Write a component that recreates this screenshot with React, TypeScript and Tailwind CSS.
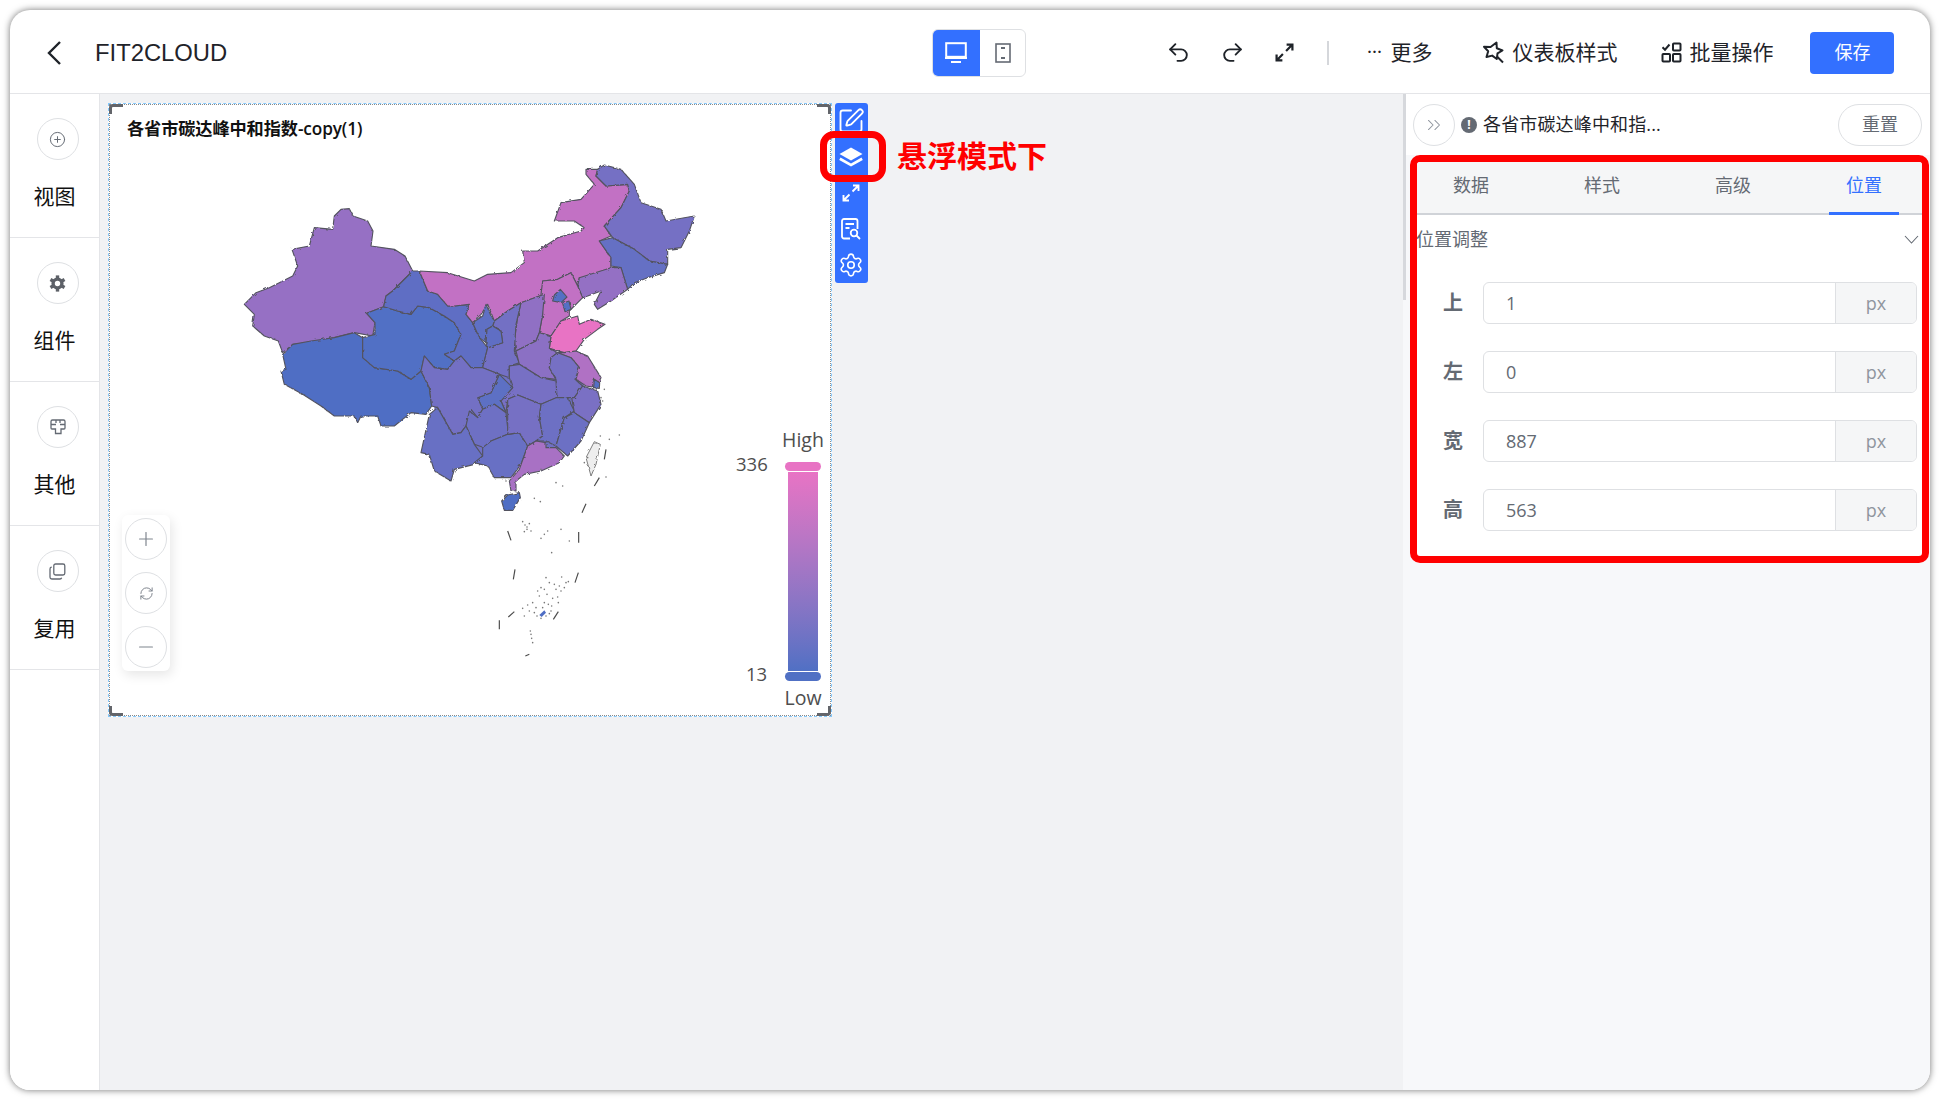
import React from "react";
import { Undo2, Redo2, SquarePen, Settings, ChevronsRight, Plus, Minus, RefreshCw, CirclePlus } from "lucide-react";

type Region = { c: string; p: string };

const regions: Region[] = [
  { c: "#9670c4", p: "360,205 385,203 396,225 440,240 456,270 450,315 520,325 552,345 575,390 545,420 515,450 495,465 488,497 437,517 462,545 455,585 400,575 340,590 270,605 215,610 185,635 172,600 130,585 95,555 100,520 70,490 105,455 145,440 215,405 230,375 213,325 265,315 280,260 335,265 340,225" },
  { c: "#4f6ec4", p: "185,640 215,610 270,600 340,590 400,575 425,590 425,650 460,680 530,690 570,715 600,690 625,740 632,795 615,820 570,815 520,855 480,855 470,825 420,825 410,845 400,825 340,825 300,795 245,760 190,730 180,690 195,685" },
  { c: "#516fc5", p: "437,517 488,497 530,510 570,520 590,495 625,500 670,525 700,545 720,580 700,630 670,640 700,660 680,685 640,680 610,645 600,690 570,715 530,690 460,680 425,650 425,590 462,580 462,545" },
  { c: "#5f6ec4", p: "595,390 575,390 545,420 515,450 495,465 488,497 530,510 570,520 590,495 625,500 670,525 700,545 720,580 700,630 670,640 700,660 720,645 750,680 785,680 800,620 775,590 755,545 735,520 745,490 700,495 680,495 650,460 620,450" },
  { c: "#c271c4", p: "1095,85 1130,85 1125,105 1155,135 1220,130 1225,150 1200,200 1150,255 1170,285 1135,300 1170,350 1170,380 1090,415 1075,410 1070,435 1050,395 1010,415 965,420 970,460 900,485 860,510 820,540 800,490 780,520 755,545 735,520 745,490 700,495 680,495 650,460 620,450 595,390 680,395 760,420 800,400 870,395 910,365 905,330 950,330 1010,290 1080,270 1090,260 1060,240 1000,240 1020,185 1080,175 1120,130 1095,100" },
  { c: "#7570c4", p: "1130,85 1150,72 1200,85 1240,130 1260,185 1320,205 1335,240 1420,225 1405,270 1380,320 1340,325 1340,370 1285,360 1240,325 1175,290 1150,255 1200,200 1225,150 1220,130 1155,135 1125,105" },
  { c: "#6570c4", p: "1135,300 1175,290 1240,325 1285,360 1340,370 1330,395 1280,410 1240,425 1220,445 1200,380 1170,375 1170,350" },
  { c: "#9470c4", p: "1075,410 1170,380 1200,380 1220,445 1170,480 1130,505 1120,490 1140,450 1100,465 1085,470 1070,435" },
  { c: "#c271c4", p: "965,420 1010,415 1050,395 1070,435 1085,470 1045,510 1045,525 1020,540 990,585 955,575 965,520 960,460" },
  { c: "#9070c4", p: "970,460 965,520 955,575 945,600 885,630 880,600 890,530 900,485" },
  { c: "#e873c4", p: "990,585 1020,540 1070,525 1075,550 1110,535 1152,550 1130,565 1090,595 1065,630 1030,635 985,622" },
  { c: "#7370c4", p: "900,485 885,550 880,630 895,665 865,675 865,710 835,700 785,680 800,620 845,605 840,570 815,555 820,540 860,510" },
  { c: "#5f70c4", p: "755,545 785,525 795,490 810,525 820,540 815,555 798,565 795,605 775,590" },
  { c: "#5f6ec4", p: "798,565 815,555 840,570 845,605 800,620 795,605" },
  { c: "#8b70c4", p: "885,630 945,600 955,575 990,585 985,622 1010,635 990,650 985,680 1005,715 960,710 895,670" },
  { c: "#b071c4", p: "1030,635 1065,630 1100,645 1140,710 1125,740 1095,735 1065,715 1075,680 1050,650 1010,635" },
  { c: "#7670c4", p: "1010,635 1050,650 1075,680 1062,715 1085,735 1060,770 1030,770 1005,770 1005,715 985,680 990,650" },
  { c: "#5570c4", p: "1120,715 1136,725 1135,742 1118,740" },
  { c: "#7770c4", p: "865,710 865,675 895,670 960,710 1005,720 1008,770 960,790 890,762 860,775 855,815 840,780 875,740" },
  { c: "#5d70c4", p: "835,700 875,740 840,780 855,815 820,790 785,805 770,770 810,755" },
  { c: "#7370c4", p: "610,645 640,680 680,685 700,660 720,645 750,680 785,680 835,700 810,755 770,770 785,805 770,830 750,805 735,855 720,875 695,880 650,800 632,795 625,740 600,690" },
  { c: "#6e70c4", p: "735,855 745,810 770,830 785,805 820,790 855,815 860,860 860,880 810,900 790,920 760,910" },
  { c: "#6770c4", p: "650,800 695,880 720,875 735,855 760,910 785,945 760,970 700,985 690,1020 640,990 625,940 600,935 625,820" },
  { c: "#6870c4", p: "785,920 810,900 860,880 895,875 920,915 900,970 870,1010 820,1010 800,975 760,965 785,945" },
  { c: "#7670c4", p: "860,775 890,762 960,790 955,830 965,885 945,900 920,915 895,875 860,880 860,820" },
  { c: "#6d70c4", p: "960,790 1005,770 1040,770 1060,810 1030,830 1005,915 975,900 945,900 965,885 955,830" },
  { c: "#7a70c4", p: "1085,735 1130,750 1140,790 1105,845 1060,815 1052,770 1060,770" },
  { c: "#6c70c4", p: "1060,815 1105,845 1080,900 1040,945 1005,915 1030,830" },
  { c: "#a871c4", p: "920,915 945,900 975,905 975,920 1005,920 1030,945 1015,965 960,990 910,1000 885,1020 885,1050 870,1050 865,1020 895,985" },
  { c: "#5570c4", p: "1000,462 1018,445 1038,468 1020,485 995,480" },
  { c: "#5570c4", p: "1025,487 1044,480 1050,505 1032,512" },
  { c: "#4f6ec4", p: "842,1080 860,1062 895,1055 898,1070 875,1108 850,1108" },
];

const dashes = [
  "1155,925 1150,955", "1135,1010 1120,1035", "1095,1088 1083,1115", "1073,1173 1073,1205", "1072,1295 1062,1325",
  "1012,1412 997,1435", "925,1540 913,1545", "835,1438 835,1465", "882,1285 877,1315", "860,1170 870,1198", "880,1412 862,1428",
];

const dots = [
  "1005,1025", "1025,1035", "940,1072", "958,1082", "905,1142", "912,1152", "925,1148", "918,1165", "930,1170", "910,1172", "970,1180", "960,1192", "980,1170", "1020,1165", "1045,1200", "992,1235",
  "975,1310", "1022,1308", "1035,1325", "1042,1322", "960,1340", "985,1325", "1005,1345", "1020,1350", "1010,1368", "955,1365", "970,1385", "992,1395", "965,1400", "935,1385", "920,1392", "905,1402", "910,1425", "940,1415", "985,1418", "975,1425", "960,1432", "930,1480", "935,1505", "1138,885", "1165,895", "1195,882", "1155,1008", "1090,965", "1100,950", "1145,780", "1150,745", "1140,770", "960,985", "855,1020",
  "950,1350", "970,1345", "1000,1330", "1015,1335", "995,1372", "982,1390", "1012,1385", "945,1400", "925,1410", "1030,1340", "978,1360", "990,1410", "948,1425", "932,1492", "928,1470", "918,1158",
];

function MapChart() {
  return (
    <svg className="absolute left-[111px] top-[36px]" width={500} height={560} viewBox="0 0 1500 1680" fill="none">
      <defs>
        <filter id="rough" x="-2%" y="-2%" width="104%" height="104%">
          <feTurbulence type="fractalNoise" baseFrequency="0.09" numOctaves="2" seed="4" />
          <feDisplacementMap in="SourceGraphic" scale="9" />
        </filter>
      </defs>
      <g filter="url(#rough)" stroke="#53535f" strokeWidth="3.4" strokeLinejoin="round">
        <polygon stroke="none" fill="#6f70c4" points="610,660 720,645 800,620 885,560 905,490 965,470 985,590 1010,640 1060,700 1090,735 1100,830 1040,930 930,910 870,1000 790,960 690,980 640,900 640,760" />
        {regions.map((r, i) => (
          <polygon key={i} points={r.p} fill={r.c} />
        ))}
        <polygon points="1095,950 1120,902 1138,910 1125,970 1110,1005" fill="#eeeeee" stroke="#666" strokeWidth="2.5" />
      </g>
      <g stroke="#4a4a4a" strokeWidth="3.5">
        {dashes.map((d, i) => {
          const [a, b] = d.split(" ").map((s) => s.split(",").map(Number));
          return <line key={i} x1={a[0]} y1={a[1]} x2={b[0]} y2={b[1]} />;
        })}
      </g>
      <g fill="#777">
        {dots.map((d, i) => {
          const [x, y] = d.split(",").map(Number);
          return <circle key={i} cx={x} cy={y} r="2.4" />;
        })}
      </g>
      <polygon points="955,1422 970,1408 975,1415 962,1428" fill="#4f6ec4" />
    </svg>
  );
}

function Expand({ s = 18, c = "currentColor", w = 2 }: { s?: number; c?: string; w?: number }) {
  return (
    <svg width={s} height={s} viewBox="0 0 18 18" fill="none" stroke={c} strokeWidth={w}>
      <path d="M10.5 7.5 16.5 1.5M11 1.5h5.5V7M7.5 10.5 1.5 16.5M1.5 11v5.5H7" />
    </svg>
  );
}

function GearFilled() {
  return (
    <svg width="17" height="17" viewBox="0 0 17 17" fill="none">
      <circle cx="8.5" cy="8.5" r="4.4" stroke="#5d6168" strokeWidth="3.4" />
      {[0, 60, 120, 180, 240, 300].map((a) => (
        <rect key={a} x="6.8" y="0.4" width="3.4" height="3" fill="#5d6168" transform={`rotate(${a} 8.5 8.5)`} />
      ))}
    </svg>
  );
}

function Other() {
  return (
    <svg width="18" height="18" viewBox="0 0 18 18" fill="none" stroke="#646a73" strokeWidth="1.3">
      <path d="M3.5 2h11a1.5 1.5 0 0 1 1.5 1.5V10a1 1 0 0 1-1 1h-3v4.5H6.5V11h-3.5a1 1 0 0 1-1-1V3.5A1.5 1.5 0 0 1 3.5 2Z" />
      <path d="M2 6.5h5M11 6.5h5M7 2v3M11 2v3" />
    </svg>
  );
}

function CopyIcon() {
  return (
    <svg width="17" height="17" viewBox="0 0 17 17" fill="none" stroke="#646a73" strokeWidth="1.3">
      <rect x="4.8" y="1" width="11" height="11" rx="1.8" />
      <path d="M2.8 4.2A1.8 1.8 0 0 0 1 6v8.2A1.8 1.8 0 0 0 2.8 16H11a1.8 1.8 0 0 0 1.7-1.2" />
    </svg>
  );
}

function StarIcon() {
  return (
    <svg width="23" height="23" viewBox="0 0 23 23" fill="none" stroke="#1f2329" strokeWidth="2" strokeLinejoin="round">
      <path d="M14.5 1.5 14.8 7.2 20.5 9.5 15.5 12.4 14.8 18 10.2 14.6 4.5 16 6.2 10.2 2 5.8 8.6 6Z" />
      <path d="M15 15.5 21 21.5" />
    </svg>
  );
}

function BatchIcon() {
  return (
    <svg width="21" height="21" viewBox="0 0 21 21" fill="none" stroke="#1f2329" strokeWidth="2">
      <rect x="12" y="1.5" width="7.5" height="7" rx="0.8" />
      <rect x="1.5" y="12" width="7.5" height="7.5" rx="0.8" />
      <rect x="12" y="12" width="7.5" height="7.5" rx="0.8" />
      <path d="M1.5 5.2 4 7.7 8.5 2.5" />
    </svg>
  );
}

function Layers() {
  return (
    <svg width="24" height="20" viewBox="0 0 24 20" fill="white">
      <path d="M12 0.5 23.5 7 12 13.5 0.5 7Z" />
      <path d="M1.5 10.6 12 16.6 22.5 10.6 23.8 13 12 19.5 0.2 13Z" />
    </svg>
  );
}

function ReportSearch() {
  return (
    <svg width="20" height="22" viewBox="0 0 20 22" fill="none" stroke="white" strokeWidth="1.8">
      <path d="M9 20.5H3a2 2 0 0 1-2-2V3a2 2 0 0 1 2-2h11.5a2 2 0 0 1 2 2v8" />
      <path d="M4.5 6h8.5M4.5 10h4" />
      <circle cx="13" cy="15" r="3.3" />
      <path d="M15.5 17.5 19 21" />
    </svg>
  );
}

function Monitor() {
  return (
    <svg width="22" height="21" viewBox="0 0 22 21" fill="none">
      <rect x="1.2" y="1.2" width="19.6" height="13.6" stroke="white" strokeWidth="2" />
      <rect x="0" y="15" width="22" height="2" fill="white" />
      <rect x="6" y="19" width="10" height="2" fill="white" />
    </svg>
  );
}

function Tablet() {
  return (
    <svg width="16" height="20" viewBox="0 0 16 20" fill="none">
      <rect x="1" y="1" width="14" height="18" stroke="#646a73" strokeWidth="1.6" />
      <rect x="6" y="4" width="4" height="2" fill="#646a73" />
      <rect x="6" y="14" width="4" height="2" fill="#646a73" />
    </svg>
  );
}

function SideItem({ icon, label }: { icon: React.ReactNode; label: string }) {
  return (
    <div className="h-[144px] border-b border-[#e4e5e8] flex flex-col items-center pt-[24px]">
      <div className="w-[42px] h-[42px] rounded-full border border-[#dee0e3] flex items-center justify-center ml-[6px]">{icon}</div>
      <div className="mt-[21px] text-[21px] leading-[30px] text-[#111]">{label}</div>
    </div>
  );
}

function Field({ label, value }: { label: string; value: string }) {
  return (
    <div className="flex items-center h-[42px] mb-[27px]">
      <div className="w-[66px] pl-[26px] text-[20px] font-bold text-[#646a73] leading-none">{label}</div>
      <div className="w-[434px] h-[42px] flex border border-[#dee0e3] rounded-[6px] overflow-hidden">
        <div className="flex-1 flex items-center pl-[22px] text-[18px] text-[#646a73]">{value}</div>
        <div className="w-[81px] flex items-center justify-center border-l border-[#dee0e3] bg-[#f5f6f7] text-[#8f959e] text-[18px]">px</div>
      </div>
    </div>
  );
}

function ZoomBtn({ children }: { children: React.ReactNode }) {
  return <div className="w-[42px] h-[42px] rounded-full border border-[#dee0e3] bg-white flex items-center justify-center text-[#7f858e]">{children}</div>;
}

function Corner({ className }: { className: string }) {
  return <div className={`absolute w-[14px] h-[10px] border-[#63656a] ${className}`} />;
}

export default function App() {
  return (
    <div className="w-[1940px] h-[1100px] p-[10px] bg-white font-['Open_Sans','Noto_Sans_CJK_SC',sans-serif] text-[#1f2329]">
      <div className="relative w-[1920px] h-[1080px] rounded-[20px] overflow-hidden bg-white flex flex-col shadow-[0_0_7px_rgba(0,0,0,0.55)]">
        {/* header */}
        <div className="h-[84px] shrink-0 border-b border-[#e4e5e8] flex items-center pt-[2px]">
          <div className="w-[922px] flex items-center">
            <svg className="ml-[36px]" width="16" height="26" viewBox="0 0 16 26" fill="none" stroke="#1f2329" strokeWidth="2.4">
              <path d="M14 2 3 13l11 11" />
            </svg>
            <div className="ml-[33px] text-[23.8px] font-['Liberation_Sans','Noto_Sans_CJK_SC',sans-serif] leading-none">FIT2CLOUD</div>
          </div>
          <div className="w-[94px] h-[48px] flex rounded-[6px] border border-[#dee0e3] overflow-hidden">
            <div className="w-[48px] bg-[#3370ff] flex items-center justify-center -ml-px"><Monitor /></div>
            <div className="flex-1 flex items-center justify-center"><Tablet /></div>
          </div>
          <div className="ml-[140px] w-[25px]"><Undo2 size={25} strokeWidth={1.8} /></div>
          <div className="ml-[29px] w-[25px]"><Redo2 size={25} strokeWidth={1.8} /></div>
          <div className="ml-[30px]"><Expand s={19} w={2.1} /></div>
          <div className="ml-[33px] w-[1.5px] h-[24px] bg-[#d5d7db]" />
          <div className="ml-[39px] text-[14px] font-bold tracking-[1px] leading-none -translate-y-[1px]">···</div>
          <div className="ml-[8px] text-[21px] leading-none">更多</div>
          <div className="ml-[50px]"><StarIcon /></div>
          <div className="ml-[7px] text-[21px] leading-none">仪表板样式</div>
          <div className="ml-[44px]"><BatchIcon /></div>
          <div className="ml-[7px] text-[21px] leading-none">批量操作</div>
          <div className="ml-[37px] w-[84px] h-[42px] rounded-[4px] bg-[#3370ff] text-white text-[18px] flex items-center justify-center">保存</div>
        </div>

        {/* body */}
        <div className="flex-1 flex min-h-0">
          {/* left rail */}
          <div className="w-[90px] shrink-0 border-r border-[#e4e5e8] bg-white">
            <SideItem icon={<CirclePlus size={17} color="#646a73" strokeWidth={1.4} />} label="视图" />
            <SideItem icon={<GearFilled />} label="组件" />
            <SideItem icon={<Other />} label="其他" />
            <SideItem icon={<CopyIcon />} label="复用" />
          </div>

          {/* canvas */}
          <div className="relative flex-1 bg-[#f1f2f4] pl-[8px] pt-[9px] flex items-start">
            <div className="relative w-[724px] h-[614px] bg-white border border-dashed border-[#86c8fa]">
              <div className="relative w-full h-full border border-dotted border-[#8a8a8a]">
                <Corner className="-left-[1px] -top-[1px] border-l-[3px] border-t-[3px] rounded-tl-[4px]" />
                <Corner className="-right-[1px] -top-[1px] border-r-[3px] border-t-[3px] rounded-tr-[4px]" />
                <Corner className="-left-[1px] -bottom-[1px] border-l-[3px] border-b-[3px] rounded-bl-[4px]" />
                <Corner className="-right-[1px] -bottom-[1px] border-r-[3px] border-b-[3px] rounded-br-[4px]" />
                <div className="absolute left-[17px] top-[12px] text-[17.2px] font-semibold leading-[24px] text-[#111] tracking-[-0.1px]">各省市碳达峰中和指数-copy(1)</div>
                <MapChart />
                {/* zoom controls */}
                <div className="absolute left-[12px] top-[410px] w-[48px] rounded-[6px] bg-white shadow-[2px_4px_12px_rgba(0,0,0,0.1)] p-[3px] flex flex-col gap-[12px]">
                  <ZoomBtn><Plus size={22} strokeWidth={1.3} /></ZoomBtn>
                  <ZoomBtn><RefreshCw size={15} strokeWidth={1.6} /></ZoomBtn>
                  <ZoomBtn><Minus size={22} strokeWidth={1.3} /></ZoomBtn>
                </div>
                {/* legend */}
                <div className="absolute left-[671px] top-[323px] w-[44px] text-center text-[19.5px] text-[#4e4e4e] leading-[24px]">High</div>
                <div className="absolute left-[626px] top-[347px] text-[18.5px] text-[#4e4e4e] leading-[24px]">336</div>
                <div className="absolute left-[636px] top-[557px] text-[18.5px] text-[#4e4e4e] leading-[24px]">13</div>
                <div className="absolute left-[673px] top-[581px] w-[40px] text-center text-[19.5px] text-[#4e4e4e] leading-[24px]">Low</div>
                <div className="absolute left-[675px] top-[357px] w-[36px] flex flex-col items-center">
                  <div className="w-[36px] h-[9px] rounded-full bg-[#e873c4]" />
                  <div className="w-[30px] h-[199px] mt-[1px] bg-gradient-to-b from-[#e873c4] to-[#5070c4]" />
                  <div className="w-[36px] h-[9px] mt-[1px] rounded-full bg-[#5070c4]" />
                </div>
              </div>
            </div>
            {/* floating toolbar */}
            <div className="absolute left-[735px] top-[9px] w-[33px] rounded-[3px] bg-[#3370ff] text-white flex flex-col pr-[1px]">
              <div className="h-[36px] flex items-center justify-center"><SquarePen size={28} strokeWidth={1.6} /></div>
              <div className="h-[36px] flex items-center justify-center"><Layers /></div>
              <div className="h-[36px] flex items-center justify-center"><Expand s={18} c="white" w={1.9} /></div>
              <div className="h-[36px] flex items-center justify-center"><ReportSearch /></div>
              <div className="h-[36px] flex items-center justify-center"><Settings size={26} strokeWidth={1.5} /></div>
            </div>
            {/* annotation */}
            <div className="absolute left-[720px] top-[37px] w-[66px] h-[51px] border-[7px] border-[#ff0000] rounded-[14px]" />
            <div className="absolute left-[797px] top-[41px] text-[30px] leading-[42px] font-bold text-[#ff0000] whitespace-nowrap">悬浮模式下</div>
          </div>

          {/* right panel */}
          <div className="relative w-[527px] shrink-0 bg-[#f7f8fa]">
            <div className="absolute left-0 top-0 w-[3px] h-[206px] bg-[#d6d8dc]" />
            <div className="ml-[3px] h-[61px] bg-white flex items-center pl-[7px]">
              <div className="w-[42px] h-[42px] rounded-full border border-[#dee0e3] flex items-center justify-center text-[#8f959e]"><ChevronsRight size={22} strokeWidth={1.1} /></div>
              <div className="ml-[6px] w-[16px] h-[16px] rounded-full bg-[#646a73] text-white text-[12px] font-bold flex items-center justify-center leading-none">!</div>
              <div className="ml-[6px] text-[18px] text-[#1f2329] leading-none -translate-y-[1px] tracking-[0.15px]">各省市碳达峰中和指...</div>
              <div className="ml-[177px] w-[84px] h-[42px] rounded-full border border-[#dee0e3] flex items-center justify-center text-[18px] text-[#646a73]">重置</div>
            </div>
            <div className="ml-[7px] w-[519px] h-[408px] border-[7px] border-[#ff0000] rounded-[10px] bg-white overflow-hidden">
              <div className="h-[53px] bg-[#f5f6f7] border-b-2 border-[#d0d3d8] flex gap-[61px] pl-[19px]">
                {["数据", "样式", "高级", "位置"].map((t, i) => (
                  <div key={t} className={`w-[70px] h-[53px] pb-[4px] shrink-0 flex items-center justify-center text-[18px] border-b-[3px] ${i === 3 ? "text-[#3370ff] border-[#3370ff]" : "text-[#646a73] border-transparent"}`}>{t}</div>
                ))}
              </div>
              <div className="h-[48px] flex items-center justify-between pr-[3px]">
                <span className="text-[18px] text-[#646a73] leading-none -ml-[1px]">位置调整</span>
                <svg width="15" height="9" viewBox="0 0 15 9" fill="none" stroke="#646a73" strokeWidth="1.1"><path d="M1 1l6.5 7L14 1" /></svg>
              </div>
              <div className="pt-[19px]">
                <Field label="上" value="1" />
                <Field label="左" value="0" />
                <Field label="宽" value="887" />
                <Field label="高" value="563" />
              </div>
            </div>
          </div>
        </div>
      </div>
    </div>
  );
}
